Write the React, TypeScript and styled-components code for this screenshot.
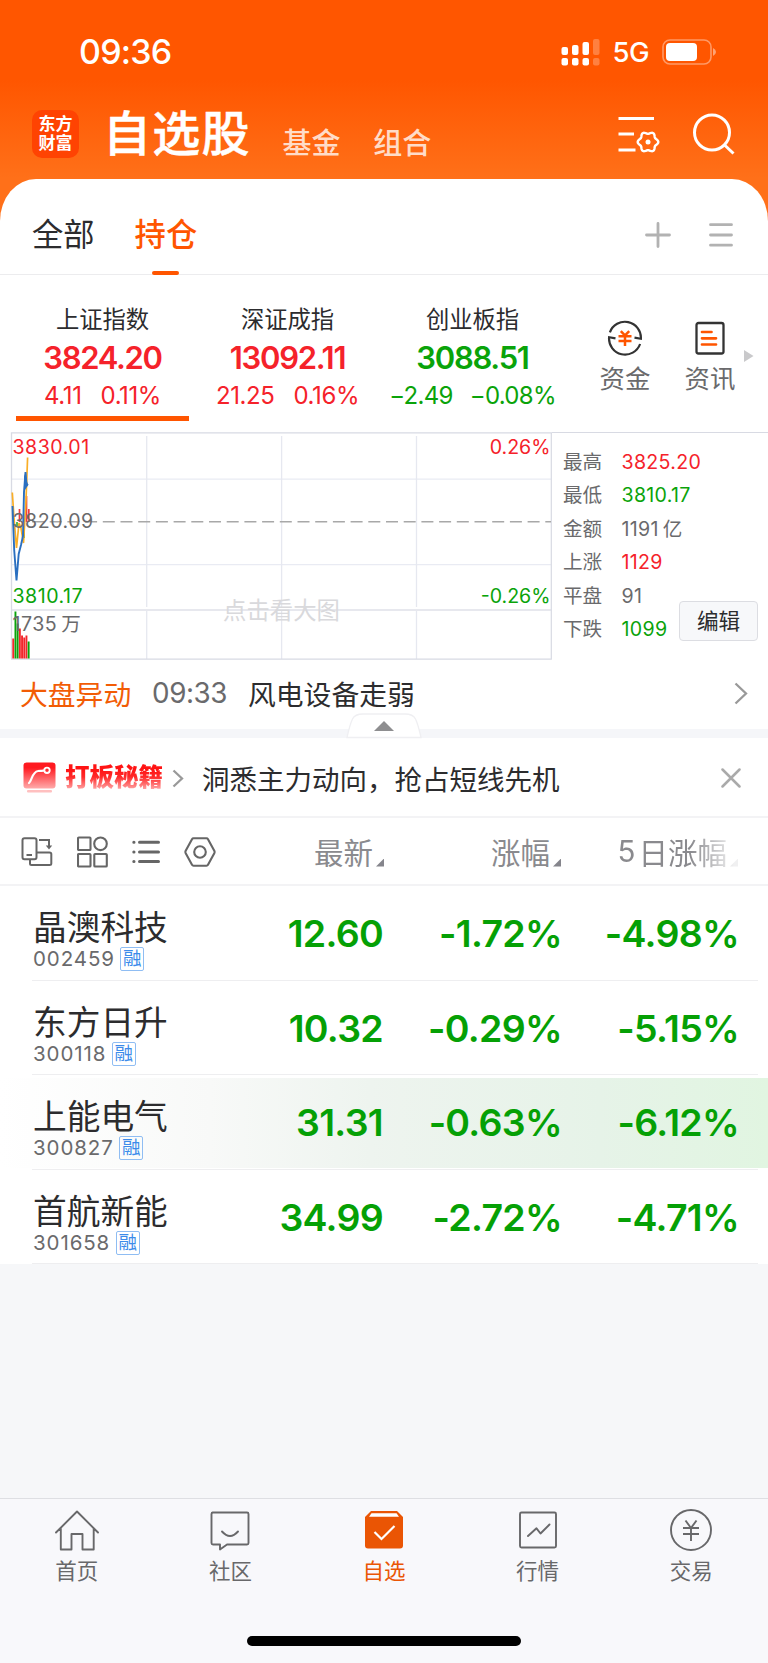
import React from "react";
import styled, { createGlobalStyle, css } from "styled-components";

const RED = "#f5222a";
const GREEN = "#0aa30a";
const ORANGE = "#ff5500";
const INK = "#2c2c2e";
const GRAY = "#6a6a6c";

const Global = createGlobalStyle`
  * { box-sizing: border-box; }
  body { margin: 0; background: #f6f7f9; }
  button { font: inherit; }
`;

type Tone = "up" | "down" | "flat";
const toneColor: Record<Tone, string> = { up: RED, down: GREEN, flat: GRAY };

const Page = styled.div`
  width: 768px;
  height: 1663px;
  display: flex;
  flex-direction: column;
  overflow: hidden;
  font-family: Inter, "Noto Sans CJK SC", sans-serif;
  color: ${INK};
  white-space: nowrap;
  background: linear-gradient(#ff5600 0, #ff5600 80px, #ff7019 178px, #ff7019 240px, #f6f7f9 240px);
`;

/* ---------- status bar ---------- */

const StatusBar = styled.div`
  height: 100px;
  flex: none;
  display: flex;
  align-items: center;
  padding: 3px 51px 0 79px;
  color: #fff;
`;
const Clock = styled.span`
  flex: 1;
  font-size: 34px;
  font-weight: 550;
  letter-spacing: -0.8px;
`;
const Network = styled.span`
  font-size: 27.5px;
  font-weight: 500;
  margin: 1px 13px 0 12px;
  letter-spacing: -0.5px;
`;

/* ---------- title bar ---------- */

const TitleBar = styled.header`
  height: 79px;
  flex: none;
  display: flex;
  align-items: center;
  padding-left: 32px;
  padding-right: 33px;
  color: #fff;
`;
const Logo = styled.div`
  width: 47px;
  height: 48px;
  margin-top: -12px;
  border-radius: 10px;
  background: #ff4302;
  display: flex;
  flex-direction: column;
  align-items: center;
  padding-top: 5px;
  font-size: 17px;
  font-weight: 700;
  line-height: 19px;
`;
const PageTitle = styled.h1`
  margin: -11px 0 0 24px;
  font-size: 48px;
  font-weight: 500;
  line-height: 60px;
  letter-spacing: 1.2px;
  -webkit-text-stroke: 0.5px #fff;
`;
const Category = styled.span<{ $gap: number }>`
  margin-left: ${(p) => p.$gap}px;
  margin-top: 8px;
  font-size: 29px;
  line-height: 36px;
  font-weight: 500;
  color: #ffdcc8;
`;
const TitleActions = styled.div`
  flex: 1;
  display: flex;
  justify-content: flex-end;
  gap: 33px;
  margin-top: -11px;
`;

/* ---------- sheet ---------- */

const Sheet = styled.main`
  flex: none;
  background: #fff;
  border-radius: 36px 36px 0 0 / 42px 42px 0 0;
`;
const GroupTabs = styled.nav`
  height: 96px;
  display: flex;
  align-items: center;
  padding: 0 35px 0 32px;
  border-bottom: 1px solid #ececee;
`;
const GroupTab = styled.span<{ $active?: boolean }>`
  position: relative;
  height: 95px;
  line-height: 113px;
  font-size: 31.3px;
  margin-right: 40px;
  ${(p) =>
    p.$active &&
    css`
      color: ${ORANGE};
      font-weight: 500;
      &::after {
        content: "";
        position: absolute;
        left: 17.5px;
        bottom: -1px;
        width: 27px;
        height: 4px;
        border-radius: 2px;
        background: ${ORANGE};
      }
    `}
`;
const GroupActions = styled.div`
  flex: 1;
  display: flex;
  justify-content: flex-end;
  gap: 38px;
  padding-top: 17px;
`;

const IndexStrip = styled.section`
  height: 157px;
  display: flex;
  padding-left: 10px;
`;
const IndexCell = styled.div<{ $active?: boolean }>`
  width: 185px;
  height: 145.5px;
  padding-top: 31px;
  display: flex;
  flex-direction: column;
  align-items: center;
  position: relative;
  ${(p) =>
    p.$active &&
    css`
      &::after {
        content: "";
        position: absolute;
        left: 6px;
        right: 6px;
        bottom: 0;
        height: 4.5px;
        background: ${ORANGE};
      }
    `}
`;
const IndexName = styled.span`
  font-size: 23.3px;
  line-height: 28px;
`;
const IndexValue = styled.strong<{ $tone: Tone }>`
  font-size: 31px;
  line-height: 38px;
  margin-top: 5px;
  font-weight: 600;
  letter-spacing: -1.3px;
  color: ${(p) => toneColor[p.$tone]};
`;
const IndexDelta = styled.span<{ $tone: Tone }>`
  display: flex;
  gap: ${(p) => (p.$tone === "down" ? 17 : 19)}px;
  font-size: 24px;
  line-height: 30px;
  margin-top: 4px;
  letter-spacing: ${(p) => (p.$tone === "down" ? -0.7 : -0.4)}px;
  color: ${(p) => toneColor[p.$tone]};
`;
const Shortcut = styled.div<{ $left: number }>`
  margin-left: ${(p) => p.$left}px;
  width: 50px;
  padding-top: 45px;
  display: flex;
  flex-direction: column;
  align-items: center;
  gap: 6.5px;
  font-size: 25.4px;
  line-height: 32px;
  color: ${GRAY};
`;
const MoreArrow = styled.svg`
  margin: 75px 0 0 9px;
`;

/* ---------- intraday chart ---------- */

const MarketPanel = styled.section`
  height: 228px;
  display: flex;
`;
const ChartBox = styled.div`
  position: relative;
  width: 552px;
  height: 228px;
`;
const ChartLabel = styled.span<{ $tone: Tone; $top: number; $right?: boolean }>`
  position: absolute;
  top: ${(p) => p.$top}px;
  ${(p) => (p.$right ? "right: 1.5px;" : "left: 12.5px;")}
  font-size: 19.6px;
  line-height: 24px;
  letter-spacing: ${(p) => (p.$right ? 0 : 0.5)}px;
  color: ${(p) => toneColor[p.$tone]};
`;
const ChartHint = styled.span`
  position: absolute;
  left: 11px;
  right: 0;
  top: 165px;
  text-align: center;
  font-size: 23.4px;
  line-height: 28px;
  color: #d9d9dc;
`;
const StatsPane = styled.div`
  flex: 1;
  position: relative;
  border-top: 1px solid #d8dae3;
  padding: 13px 0 0 11px;
`;
const StatRow = styled.div`
  display: flex;
  height: 33.4px;
  line-height: 33.4px;
  font-size: 19.6px;
  color: ${GRAY};
`;
const StatName = styled.span`
  width: 58.5px;
`;
const StatValue = styled.span<{ $tone: Tone }>`
  letter-spacing: 0.3px;
  color: ${(p) => toneColor[p.$tone]};
`;
const Unit = styled.span`
  margin-left: 4px;
`;
const EditButton = styled.button`
  position: absolute;
  left: 127px;
  top: 168px;
  width: 79px;
  height: 40px;
  padding: 0;
  font-size: 21.6px;
  line-height: 36px;
  color: ${INK};
  background: #f7f8fa;
  border: 1px solid #dcdde2;
  border-radius: 4px;
`;

const NewsRow = styled.section`
  position: relative;
  height: 78px;
  border-bottom: 9px solid #f5f6f9;
  display: flex;
  align-items: center;
  padding: 0 20px 3px 20px;
  font-size: 27.8px;
`;
const NewsTag = styled.span`
  color: #f25c05;
  width: 132px;
`;
const NewsTime = styled.span`
  color: ${GRAY};
  width: 96px;
  letter-spacing: -0.4px;
`;
const NewsText = styled.span`
  flex: 1;
`;
const CollapseHandle = styled.svg`
  position: absolute;
  left: 346px;
  top: 53px;
`;

/* ---------- promo ---------- */

const PromoRow = styled.section`
  height: 80px;
  display: flex;
  align-items: center;
  padding: 2px 27px 0 23px;
  border-bottom: 2px solid #f3f3f5;
`;
const PromoBrand = styled.span`
  margin: -2px 9px 0 9px;
  font-size: 24.5px;
  line-height: 30px;
  font-weight: 900;
  letter-spacing: 0;
  color: transparent;
  background: linear-gradient(#ff1414 25%, #ff2a2a 50%, #ffb0b0 95%);
  background-clip: text;
  -webkit-background-clip: text;
`;
const PromoText = styled.span`
  flex: 1;
  margin-left: 18px;
  font-size: 27.5px;
`;

/* ---------- watch list ---------- */

const ListHeader = styled.div`
  height: 68px;
  display: flex;
  align-items: center;
  padding-left: 21px;
  border-bottom: 2px solid #f3f3f5;
`;
const ViewIcons = styled.div`
  width: 194.5px;
  padding-top: 2px;
  display: flex;
  align-items: center;
  justify-content: space-between;
`;
const ColumnTitle = styled.span<{ $width: number; $fade?: boolean }>`
  width: ${(p) => p.$width}px;
  margin-top: -1px;
  display: flex;
  justify-content: flex-end;
  align-items: center;
  font-size: 29.5px;
  color: #8a8a8e;
  ${(p) =>
    p.$fade &&
    css`
      mask-image: linear-gradient(90deg, #000 0, #000 calc(100% - 48px), rgba(0, 0, 0, 0.12) calc(100% - 4px));
    `}
`;
const Spaced = styled.span`
  margin-right: 3px;
`;
const SortMark = styled.i`
  width: 8px;
  height: 8px;
  margin: 24px 0 0 3px;
  background: #85858c;
  clip-path: polygon(100% 0, 100% 100%, 0 100%);
`;
const StockRow = styled.div<{ $flash?: boolean }>`
  height: 94.5px;
  padding-left: 32px;
  padding-right: 10px;
  ${(p) =>
    p.$flash &&
    css`
      background: linear-gradient(90deg, #fff 0, #f8f9f8 210px, #eef4ef 370px, #e6f3e8 600px, #e1f5e1 768px) 0 2.5px / 100% 90px no-repeat;
    `}
`;
const StockInner = styled.div`
  height: 94.5px;
  display: flex;
  border-bottom: 1.5px solid #eeeef0;
`;
const StockId = styled.div`
  width: 170px;
  padding: 22px 0 0 1px;
`;
const StockName = styled.div`
  font-size: 33.7px;
  line-height: 40px;
`;
const StockMeta = styled.div`
  display: flex;
  align-items: center;
  gap: 5.5px;
  margin-top: -1px;
  font-size: 20.5px;
  line-height: 24px;
  letter-spacing: 0.9px;
  color: ${GRAY};
`;
const MarginBadge = styled.span`
  width: 24px;
  height: 24px;
  border: 1.5px solid #8fbdf3;
  border-radius: 2px;
  font-size: 18.5px;
  line-height: 21px;
  letter-spacing: 0;
  text-align: center;
  color: #3b8bea;
`;
const Quote = styled.span<{ $width: number }>`
  width: ${(p) => p.$width}px;
  text-align: right;
  font-size: 37.5px;
  line-height: 95px;
  font-weight: 600;
  letter-spacing: -0.7px;
  color: #05a005;
`;

/* ---------- bottom bar ---------- */

const BottomBar = styled.footer`
  margin-top: auto;
  height: 165px;
  flex: none;
  background: #f8f8fb;
  border-top: 1px solid #dedfe3;
  display: flex;
  flex-direction: column;
  align-items: center;
`;
const BottomTabs = styled.nav`
  align-self: stretch;
  display: grid;
  grid-template-columns: repeat(5, 1fr);
  height: 137px;
`;
const BottomTab = styled.span<{ $active?: boolean }>`
  display: flex;
  flex-direction: column;
  align-items: center;
  padding-top: 10px;
  font-size: 21.5px;
  line-height: 28px;
  color: ${(p) => (p.$active ? "#ea5504" : "#68686a")};
  svg {
    margin-bottom: 6px;
  }
`;
const HomeIndicator = styled.div`
  width: 274px;
  height: 10px;
  border-radius: 5px;
  background: #000;
`;
const Spacer = styled.div`
  flex: 1;
  background: #f6f7f9;
`;

/* ---------- icons ---------- */

const SignalIcon = () => (
  <svg width="39" height="28" viewBox="0 0 39 28" fill="#fff">
    <rect x="0.5" y="9" width="6.5" height="8" rx="2" />
    <rect x="11" y="7" width="6.5" height="10" rx="2" />
    <rect x="21.5" y="4" width="6.5" height="13" rx="2" />
    <rect x="32" y="1" width="6.5" height="16" rx="2" opacity="0.25" />
    <rect x="0.5" y="20" width="6.5" height="7.5" rx="2" />
    <rect x="11" y="20" width="6.5" height="7.5" rx="2" />
    <rect x="21.5" y="20" width="6.5" height="7.5" rx="2" />
    <rect x="32" y="20" width="6.5" height="7.5" rx="2" opacity="0.25" />
  </svg>
);
const BatteryIcon = () => (
  <svg width="55" height="26" viewBox="0 0 55 26">
    <rect x="1" y="1" width="48" height="24" rx="7" fill="none" stroke="#fff" strokeWidth="1.6" opacity="0.4" />
    <rect x="4" y="4" width="31" height="18" rx="4" fill="#fff" />
    <path d="M51 9q3 1.5 3 4t-3 4z" fill="#fff" opacity="0.45" />
  </svg>
);

/* Six-lobed outline of the settings gear. */
const gearPath = (cx: number, cy: number, r: number, amp: number) => {
  const pts: string[] = [];
  for (let i = 0; i < 72; i++) {
    const a = (i / 72) * Math.PI * 2;
    const rr = r + amp * Math.cos(6 * a);
    pts.push(`${(cx + rr * Math.cos(a)).toFixed(2)} ${(cy + rr * Math.sin(a)).toFixed(2)}`);
  }
  return `M${pts.join("L")}Z`;
};

const FilterIcon = () => (
  <svg width="42" height="42" viewBox="0 0 42 42" fill="none" stroke="#fff" strokeWidth="2.8">
    <path d="M0.5 5.500H36M0.5 21H16M0.5 37H17.500" />
    <path d={gearPath(30, 29, 9.2, 1.1)} strokeWidth="2.400" strokeLinejoin="round" />
    <circle cx="30" cy="29" r="2.500" fill="#fff" stroke="none" />
  </svg>
);
const SearchIcon = () => (
  <svg width="42" height="42" viewBox="0 0 42 42" fill="none" stroke="#fff" strokeWidth="3">
    <circle cx="19" cy="19.500" r="17.500" />
    <path d="M31 31.500L40.500 40.500" />
  </svg>
);
const PlusIcon = () => (
  <svg width="26" height="26" viewBox="0 0 26 26" stroke="#b2b2b2" strokeWidth="2.800" strokeLinecap="round">
    <path d="M13 1.500V24.500M1.500 13H24.500" />
  </svg>
);
const MenuIcon = () => (
  <svg width="24" height="26" viewBox="0 0 24 26" stroke="#b2b2b2" strokeWidth="2.800" strokeLinecap="round">
    <path d="M1.500 2.700H22.500M1.500 13H22.500M1.500 23.200H22.500" />
  </svg>
);
const FundsIcon = () => (
  <svg width="36" height="36" viewBox="0 0 36 36" fill="none" stroke="#333" strokeWidth="2.200">
    <path d="M2.900 12.300A16 16 0 0 1 33.900 18.800L27.500 17.600" />
    <path d="M33.100 24A16 16 0 0 1 2.100 17.200L8.500 18.400" />
    <path d="M13.800 11.200L18 15.400L22.200 11.200M18 15.400V26M11.500 16.300H24.500M11.500 21H24.500" stroke={ORANGE} strokeWidth="2.500" />
  </svg>
);
const InfoIcon = () => (
  <svg width="36" height="36" viewBox="0 0 36 36" fill="none" stroke="#333" strokeWidth="2.300">
    <rect x="4.500" y="3" width="27" height="30.500" rx="2" />
    <path d="M10 12H19.500M10 18.300H24M10 24.500H24" stroke={ORANGE} strokeWidth="2.700" strokeLinecap="round" />
  </svg>
);
const Chevron = ({ w, h, color }: { w: number; h: number; color: string }) => (
  <svg width={w + 2} height={h + 2} viewBox={`-1 -1 ${w + 2} ${h + 2}`} fill="none" stroke={color} strokeWidth="2.300">
    <path d={`M0.500 0.500L${w - 1} ${h / 2}L0.500 ${h - 0.5}`} />
  </svg>
);
const CloseIcon = () => (
  <svg width="20" height="20" viewBox="0 0 20 20" stroke="#aaa" strokeWidth="2.500" strokeLinecap="round">
    <path d="M1.500 1.500L18.500 18.500M18.500 1.500L1.500 18.500" />
  </svg>
);
const PromoIcon = () => (
  <svg width="33" height="32" viewBox="0 0 33 32">
    <defs>
      <linearGradient id="promo" x1="0" y1="0" x2="0" y2="1">
        <stop offset="0.200" stopColor="#ff1a20" />
        <stop offset="1" stopColor="#ffabab" />
      </linearGradient>
    </defs>
    <rect x="0.500" y="0.500" width="32" height="26" rx="3" fill="url(#promo)" />
    <rect x="4" y="28" width="25" height="2.500" rx="1" fill="#ffc0c0" />
    <path d="M6 21C9 18.500 9 10 15 9C17 8.600 18.500 9 20.500 8.700" fill="none" stroke="#fff" strokeWidth="2.200" strokeLinecap="round" />
    <circle cx="24" cy="8.300" r="2.700" fill="none" stroke="#fff" strokeWidth="1.900" />
  </svg>
);
const RotateIcon = () => (
  <svg width="32" height="32" viewBox="0 0 32 32" fill="none" stroke="#666" strokeWidth="2">
    <rect x="1.500" y="2.300" width="14" height="21" rx="2" />
    <path d="M5.500 19H11M9 23.500V27.500Q9 29 10.500 29H28.500Q30.300 29 30.300 27.500V18Q30.300 16.500 28.500 16.500H16" />
    <path d="M18 4H28V11" />
    <path d="M24.800 9.500H31.200L28 13.500Z" fill="#666" stroke="none" />
  </svg>
);
const GridIcon = () => (
  <svg width="32" height="32" viewBox="0 0 32 32" fill="none" stroke="#666" strokeWidth="2.100">
    <rect x="1" y="1.500" width="12.500" height="12.500" rx="0.800" />
    <circle cx="23.500" cy="7.800" r="6.300" />
    <rect x="1" y="18" width="12.500" height="12.500" rx="0.800" />
    <rect x="17.300" y="18" width="12.500" height="12.500" rx="0.800" />
  </svg>
);
const ListIcon = () => (
  <svg width="28" height="24" viewBox="0 0 28 24" stroke="#666" strokeWidth="3" strokeLinecap="round">
    <path d="M7.500 2.300H26.500M7.500 12H26.500M7.500 21.500H26.500M1.800 2.300H2M1.800 12H2M1.800 21.500H2" />
  </svg>
);
const HexIcon = () => (
  <svg width="32" height="30" viewBox="0 0 32 30" fill="none" stroke="#666" strokeWidth="2.100" strokeLinejoin="round">
    <path d="M9.500 1.300H22.500Q23.500 1.300 24 2.200L30.300 13.800Q30.900 15 30.300 16.200L24 27.800Q23.500 28.700 22.500 28.700H9.500Q8.500 28.700 8 27.800L1.700 16.200Q1.100 15 1.700 13.800L8 2.200Q8.500 1.300 9.500 1.300Z" />
    <circle cx="16" cy="15" r="5.800" />
  </svg>
);

const TabHome = () => (
  <svg width="46" height="42" viewBox="0 0 46 42" fill="none" stroke="#68686a" strokeWidth="1.900" strokeLinejoin="round" strokeLinecap="round">
    <path d="M2 23.500L23 2.500L44 23.500M6.800 19.500V40.500H17.500V25H28.500V40.500H39.700V19.500" />
  </svg>
);
const TabCommunity = () => (
  <svg width="46" height="42" viewBox="0 0 46 42" fill="none" stroke="#68686a" strokeWidth="1.900" strokeLinejoin="round" strokeLinecap="round">
    <path d="M5.500 3.500H40Q41.500 3.500 41.500 5V34Q41.500 35.500 40 35.500H20L13 40.500V35.500H6Q4.500 35.500 4.500 34V5Q4.500 3.500 6 3.500" />
    <path d="M15 22.500Q23 31.500 31 22.500" />
  </svg>
);
const TabWatch = () => (
  <svg width="46" height="42" viewBox="0 0 46 42">
    <path d="M10 2H36L42 8V36.500Q42 39.500 39 39.500H7Q4 39.500 4 36.500V8Z" fill="#ea5504" />
    <path d="M10.500 4.200H35.500L38 7.800H8Z" fill="#fff" />
    <path d="M13.500 23L20.500 30L33.500 17" fill="none" stroke="#fff" strokeWidth="2.200" />
  </svg>
);
const TabMarket = () => (
  <svg width="46" height="42" viewBox="0 0 46 42" fill="none" stroke="#68686a" strokeWidth="1.900" strokeLinecap="round" strokeLinejoin="round">
    <rect x="5" y="3.500" width="36" height="35" rx="1.500" />
    <path d="M13 27L21.500 19.300L25.500 24.500L34.500 15.500" />
  </svg>
);
const TabTrade = () => (
  <svg width="46" height="42" viewBox="0 0 46 42" fill="none" stroke="#68686a" strokeWidth="1.900">
    <circle cx="23" cy="21" r="20" />
    <path d="M17.500 11.500L23 19L28.500 11.500M23 19V32M15 19H31M15 25H31" />
  </svg>
);

/* ---------- data ---------- */

type IndexItem = { name: string; value: string; delta: string; pct: string; tone: Tone; active?: boolean };
const indices: IndexItem[] = [
  { name: "上证指数", value: "3824.20", delta: "4.11", pct: "0.11%", tone: "up", active: true },
  { name: "深证成指", value: "13092.11", delta: "21.25", pct: "0.16%", tone: "up" },
  { name: "创业板指", value: "3088.51", delta: "−2.49", pct: "−0.08%", tone: "down" },
];

const stats: { name: string; value: string; unit?: string; tone: Tone }[] = [
  { name: "最高", value: "3825.20", tone: "up" },
  { name: "最低", value: "3810.17", tone: "down" },
  { name: "金额", value: "1191", unit: "亿", tone: "flat" },
  { name: "上涨", value: "1129", tone: "up" },
  { name: "平盘", value: "91", tone: "flat" },
  { name: "下跌", value: "1099", tone: "down" },
];

const stocks = [
  { name: "晶澳科技", code: "002459", last: "12.60", pct: "-1.72%", five: "-4.98%" },
  { name: "东方日升", code: "300118", last: "10.32", pct: "-0.29%", five: "-5.15%" },
  { name: "上能电气", code: "300827", last: "31.31", pct: "-0.63%", five: "-6.12%", flash: true },
  { name: "首航新能", code: "301658", last: "34.99", pct: "-2.72%", five: "-4.71%" },
];

const volumes = [
  { h: 20, up: true },
  { h: 47, up: false },
  { h: 35, up: false },
  { h: 30, up: true },
  { h: 23, up: true },
  { h: 21, up: true },
  { h: 23, up: true },
  { h: 17, up: false },
];

const IntradayChart = () => (
  <svg width="552" height="228" viewBox="0 0 552 228" fill="none">
    <path d="M12 47.200H551M12 132.700H551" stroke="#e9ebf3" strokeWidth="1.300" />
    <path d="M146.700 4V175M281.600 4V175M416.500 4V175M146.700 179V227M281.600 179V227M416.500 179V227" stroke="#e6e8f0" strokeWidth="1.300" />
    <path d="M11 178H551.500" stroke="#dfe1e9" strokeWidth="1.500" />
    <path d="M11.500 227V0.800H552" stroke="#d8dae3" strokeWidth="1.300" />
    <path d="M551.300 1V227.200H11" stroke="#d8dae3" strokeWidth="1.200" />
    <path d="M19.500 90V77M26.500 90V64M28.800 90V77" stroke="#f0393d" strokeWidth="1.700" />
    <path d="M24 90V106M17 90V94" stroke="#1fa31f" strokeWidth="1.500" />
    <path d="M12.300 60.500L14 86L16.500 116L19 91L21 96L23.500 111L26 68L27.600 25.500" stroke="#f9ae27" strokeWidth="1.700" />
    <path d="M12.500 74L14.200 118L16.500 148.500L18.700 122L21 113L23 104L24 60L25.500 40L26.500 52L28 53" stroke="#2a6fc0" strokeWidth="1.900" />
    <path d="M24 42L28.300 53L24.300 59Z" fill="#2a6fc0" />
    {volumes.map((v, i) => (
      <rect key={i} x={12.3 + i * 2.2} y={226.500 - v.h} width="1.900" height={v.h} fill={v.up ? "#f3262b" : "#0aa30a"} />
    ))}
  </svg>
);
const MidLine = styled.svg`
  position: absolute;
  left: 0;
  top: 0;
`;

const tabs = [
  { label: "首页", Icon: TabHome },
  { label: "社区", Icon: TabCommunity },
  { label: "自选", Icon: TabWatch, active: true },
  { label: "行情", Icon: TabMarket },
  { label: "交易", Icon: TabTrade },
];

export default function App() {
  return (
    <Page>
      <Global />
      <StatusBar>
        <Clock>09:36</Clock>
        <SignalIcon />
        <Network>5G</Network>
        <BatteryIcon />
      </StatusBar>
      <TitleBar>
        <Logo>
          <span>东方</span>
          <span>财富</span>
        </Logo>
        <PageTitle>自选股</PageTitle>
        <Category $gap={32}>基金</Category>
        <Category $gap={32.5}>组合</Category>
        <TitleActions>
          <FilterIcon />
          <SearchIcon />
        </TitleActions>
      </TitleBar>

      <Sheet>
        <GroupTabs>
          <GroupTab>全部</GroupTab>
          <GroupTab $active>持仓</GroupTab>
          <GroupActions>
            <PlusIcon />
            <MenuIcon />
          </GroupActions>
        </GroupTabs>

        <IndexStrip>
          {indices.map((it) => (
            <IndexCell key={it.name} $active={it.active}>
              <IndexName>{it.name}</IndexName>
              <IndexValue $tone={it.tone}>{it.value}</IndexValue>
              <IndexDelta $tone={it.tone}>
                <span>{it.delta}</span>
                <span>{it.pct}</span>
              </IndexDelta>
            </IndexCell>
          ))}
          <Shortcut $left={35}>
            <FundsIcon />
            资金
          </Shortcut>
          <Shortcut $left={35}>
            <InfoIcon />
            资讯
          </Shortcut>
          <MoreArrow width="10" height="12" viewBox="0 0 10 12">
            <path d="M0 0L9.500 6L0 12Z" fill="#c9c9cb" />
          </MoreArrow>
        </IndexStrip>

        <MarketPanel>
          <ChartBox>
            <IntradayChart />
            <MidLine width="552" height="228" viewBox="0 0 552 228">
              <path d="M32 89.700H551" stroke="#a8a8a8" strokeWidth="1.500" strokeDasharray="12 5.700" />
            </MidLine>
            <ChartHint>点击看大图</ChartHint>
            <ChartLabel $tone="up" $top={3}>3830.01</ChartLabel>
            <ChartLabel $tone="flat" $top={77}>3820.09</ChartLabel>
            <ChartLabel $tone="down" $top={152}>3810.17</ChartLabel>
            <ChartLabel $tone="flat" $top={180}>
              1735<Unit>万</Unit>
            </ChartLabel>
            <ChartLabel $tone="up" $top={3} $right>0.26%</ChartLabel>
            <ChartLabel $tone="down" $top={152} $right>-0.26%</ChartLabel>
          </ChartBox>
          <StatsPane>
            {stats.map((s) => (
              <StatRow key={s.name}>
                <StatName>{s.name}</StatName>
                <StatValue $tone={s.tone}>
                  {s.value}
                  {s.unit && <Unit>{s.unit}</Unit>}
                </StatValue>
              </StatRow>
            ))}
            <EditButton>编辑</EditButton>
          </StatsPane>
        </MarketPanel>

        <NewsRow>
          <NewsTag>大盘异动</NewsTag>
          <NewsTime>09:33</NewsTime>
          <NewsText>风电设备走弱</NewsText>
          <Chevron w={12} h={21} color="#999" />
          <CollapseHandle width="76" height="26" viewBox="0 0 76 26">
            <path d="M1 24.500Q4 11 6.500 6Q9 1 17 1H59Q67 1 69.500 6Q72 11 75 24.500Z" fill="#fff" stroke="#efeff2" strokeWidth="1.300" />
            <path d="M28 18L38 8L48 18Z" fill="#8e8e90" />
          </CollapseHandle>
        </NewsRow>

        <PromoRow>
          <PromoIcon />
          <PromoBrand>打板秘籍</PromoBrand>
          <Chevron w={10} h={17} color="#999" />
          <PromoText>洞悉主力动向，抢占短线先机</PromoText>
          <CloseIcon />
        </PromoRow>

        <ListHeader>
          <ViewIcons>
            <RotateIcon />
            <GridIcon />
            <ListIcon />
            <HexIcon />
          </ViewIcons>
          <ColumnTitle $width={168.5}>
            最新
            <SortMark />
          </ColumnTitle>
          <ColumnTitle $width={177}>
            涨幅
            <SortMark />
          </ColumnTitle>
          <ColumnTitle $width={177} $fade>
            <Spaced>5</Spaced>日涨幅
            <SortMark />
          </ColumnTitle>
        </ListHeader>

        {stocks.map((s) => (
          <StockRow key={s.code} $flash={s.flash}>
            <StockInner>
              <StockId>
                <StockName>{s.name}</StockName>
                <StockMeta>
                  {s.code}
                  <MarginBadge>融</MarginBadge>
                </StockMeta>
              </StockId>
              <Quote $width={181}>{s.last}</Quote>
              <Quote $width={179}>{s.pct}</Quote>
              <Quote $width={177}>{s.five}</Quote>
            </StockInner>
          </StockRow>
        ))}
      </Sheet>
      <Spacer />

      <BottomBar>
        <BottomTabs>
          {tabs.map(({ label, Icon, active }) => (
            <BottomTab key={label} $active={active}>
              <Icon />
              {label}
            </BottomTab>
          ))}
        </BottomTabs>
        <HomeIndicator />
      </BottomBar>
    </Page>
  );
}
